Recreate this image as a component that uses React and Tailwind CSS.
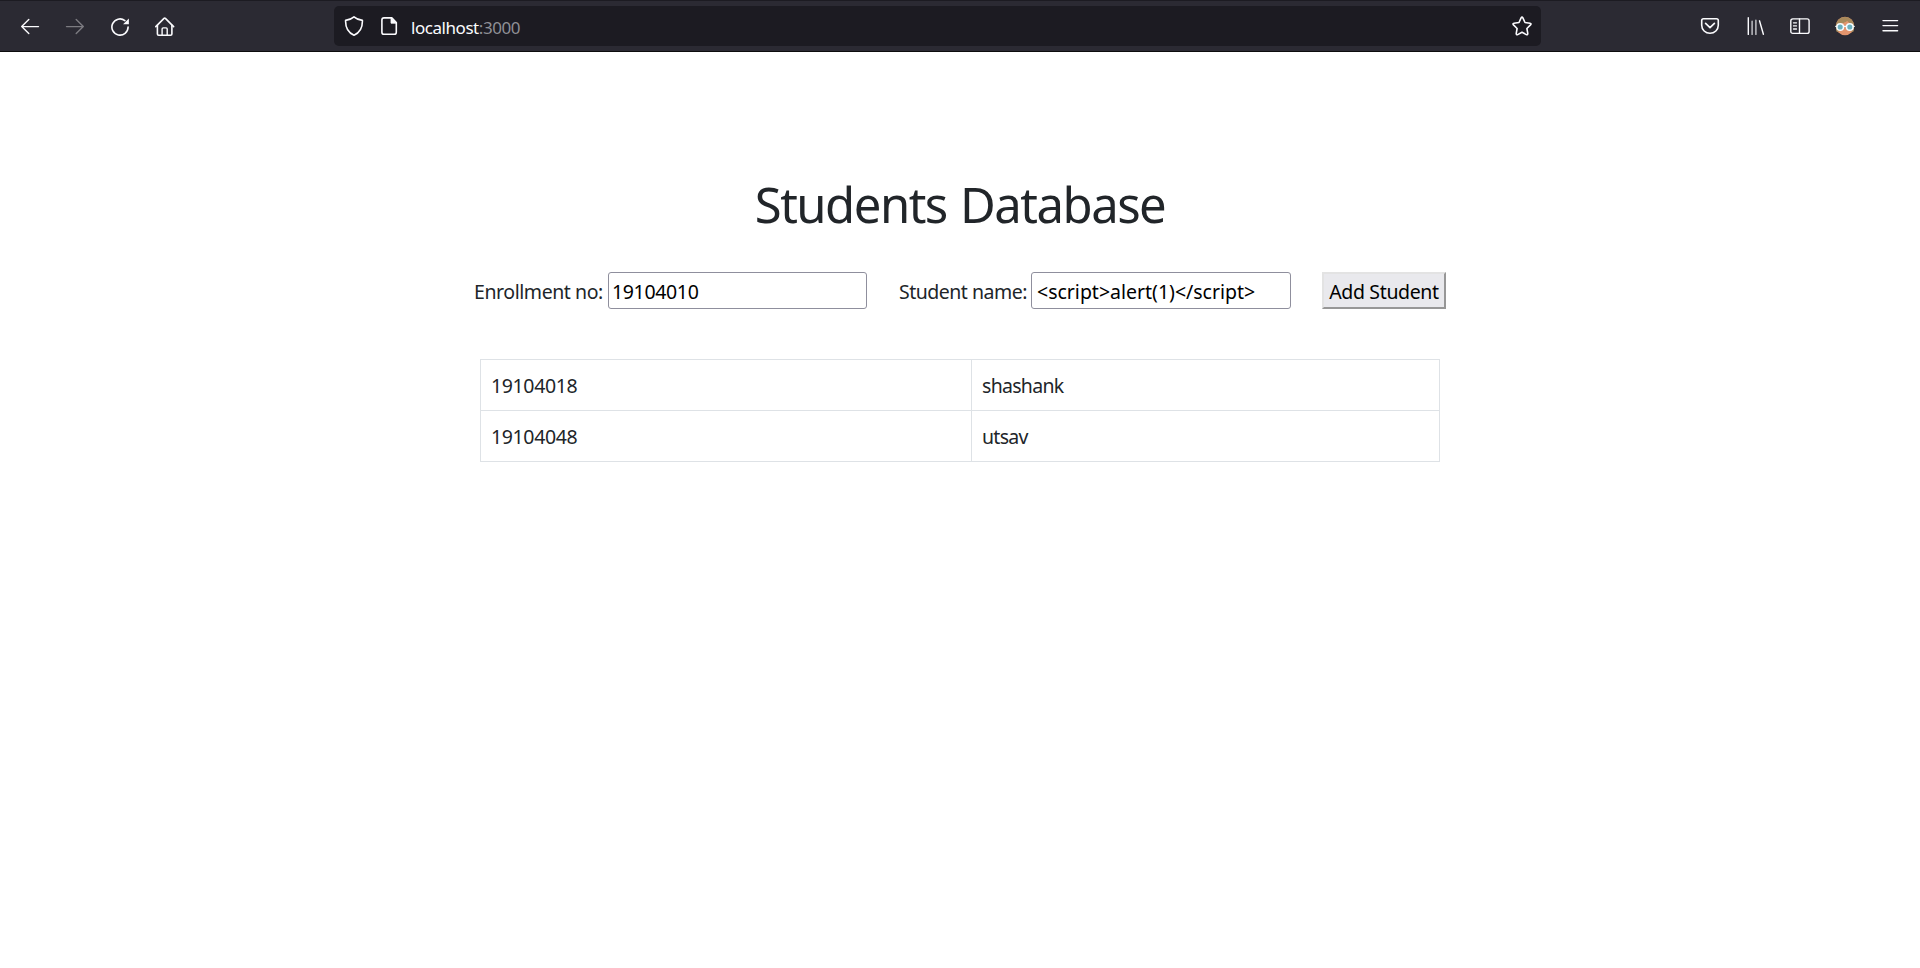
import React from "react";

function Icon({ children, className = "" }) {
  return (
    <svg
      viewBox="0 0 20 20"
      fill="none"
      stroke="currentColor"
      strokeWidth="1.4"
      strokeLinecap="round"
      strokeLinejoin="round"
      className={`h-5 w-5 shrink-0 ${className}`}
    >
      {children}
    </svg>
  );
}

const BackIcon = () => (
  <Icon>
    <path d="M1.7 10.6H18.5M8.8 3.6L1.7 10.6L8.8 17.6" />
  </Icon>
);

const ForwardIcon = () => (
  <Icon className="text-[#7c7b81]">
    <path d="M1.5 10.6H18.3M11.2 3.6L18.3 10.6L11.2 17.6" />
  </Icon>
);

const ReloadIcon = () => (
  <Icon>
    <path strokeWidth="1.6" d="M14.9 4.6A8.1 8.1 0 1 0 18.1 11" />
    <path d="M18.9 2.5V8.3H13.1Z" fill="currentColor" stroke="none" />
  </Icon>
);

const HomeIcon = () => (
  <Icon>
    <path strokeWidth="1.6" d="M0.8 10.6L9 2.4Q9.7 1.8 10.4 2.4L18.6 10.6" />
    <path strokeWidth="1.6" d="M2.4 9.4V18Q2.4 19.2 3.7 19.2H15.6Q16.9 19.2 16.9 18V9.4" />
    <path d="M7.1 19V13Q7.1 11.9 8.2 11.9H11.1Q12.2 11.9 12.2 13V19" />
  </Icon>
);

const ShieldIcon = () => (
  <Icon>
    <path
      strokeWidth="1.6"
      d="M10 0.9C8 2.7 4.6 4 1.6 4.4C1.4 10.4 3 16.3 10 19.2C17 16.3 18.6 10.4 18.4 4.4C15.4 4 12 2.7 10 0.9Z"
    />
  </Icon>
);

const PageIcon = () => (
  <Icon>
    <path strokeWidth="1.6" d="M12.8 1.9H5Q2.9 1.9 2.9 4V16.2Q2.9 18.3 5 18.3H15.2Q17.3 18.3 17.3 16.2V6.6Z" />
    <path d="M12 1.8V7.2H17.6Z" fill="currentColor" strokeWidth="0.8" />
  </Icon>
);

const StarIcon = () => (
  <Icon>
    <path
      strokeWidth="1.6"
      d="M9.1 1.9Q10 .4 10.9 1.9L13 6.5L18 7.2Q19.7 7.6 18.5 8.9L14.9 12.5L15.8 17.6Q15.8 19.3 14.3 18.6L10 16.2L5.7 18.6Q4.2 19.3 4.2 17.6L5.1 12.5L1.5 8.9Q.3 7.6 2 7.2L7 6.5Z"
    />
  </Icon>
);

const PocketIcon = () => (
  <Icon>
    <path strokeWidth="1.6" d="M3.5 2.8H16.5Q18.3 2.8 18.3 4.6V9.3A8.3 8 0 0 1 1.7 9.3V4.6Q1.7 2.8 3.5 2.8Z" />
    <path strokeWidth="1.7" d="M5.6 7.4L10 11.6L14.4 7.4" />
  </Icon>
);

const LibraryIcon = () => (
  <Icon>
    <path d="M3.3 1.8V18.4" />
    <path d="M7.1 5.3V18.4M10.9 4.3V18.4" stroke="#c9c9cd" />
    <path d="M14.5 4.8L18.4 18.3" />
  </Icon>
);

const SidebarIcon = () => (
  <Icon>
    <rect x="0.8" y="2.9" width="18.3" height="14.5" rx="2" />
    <path d="M9.5 3V17.3" />
    <path d="M3.5 6.8H6.5M3.5 9.9H6.5M3.5 13H6.5" strokeWidth="1.3" />
  </Icon>
);

const AvatarIcon = () => (
  <Icon>
    <g stroke="none">
      <circle cx="10" cy="10" r="9.2" fill="#e2946d" />
      <path d="M1.5 15.6Q0 9 2.2 5.2Q5 .8 10 .9Q15 .8 17.8 5.2Q20 9 18.5 15.6L16.5 16.2V9L12.5 5.2Q8 7.7 3.6 7.8V16.2Z" fill="#a8895b" />
      <path d="M12.3 5.1Q9 8 3.6 8V13H16.4V9Q14 7.6 12.3 5.1Z" fill="#e2946d" />
    </g>
    <circle cx="5.2" cy="11" r="3.3" fill="#6baebd" stroke="#f4fbff" strokeWidth="1.5" />
    <circle cx="14.8" cy="11" r="3.3" fill="#6baebd" stroke="#f4fbff" strokeWidth="1.5" />
    <path d="M8.8 10.4H11.2M.9 10.4H1.6M18.4 10.4H19.1" stroke="#f4fbff" />
  </Icon>
);

const MenuIcon = () => (
  <Icon>
    <path d="M3 4.6H17.6M3 9.6H17.6M3 14.8H17.6" />
  </Icon>
);

function BrowserToolbar() {
  return (
    <header className="flex h-[52px] items-center border-t border-b border-t-[#1c1b22] border-b-[#0c0c0d] bg-[#2b2a33] pr-5 pl-5 text-[#fbfbfe]">
      <nav className="flex w-[314px] shrink-0 items-center gap-[25px]">
        <BackIcon />
        <ForwardIcon />
        <ReloadIcon />
        <HomeIcon />
      </nav>
      <div className="flex h-10 w-[1207px] shrink-0 items-center rounded-[5px] bg-[#1c1b22] pr-[9px] pl-[10px]">
        <ShieldIcon />
        <span className="ml-[15px] flex">
          <PageIcon />
        </span>
        <span className="ml-[12px] flex-1 pt-[3px] text-[17px] leading-5 tracking-[-0.45px]">
          localhost<span className="text-[#8f8f95]">:3000</span>
        </span>
        <StarIcon />
      </div>
      <div className="ml-auto flex items-center gap-[25px]">
        <PocketIcon />
        <LibraryIcon />
        <SidebarIcon />
        <AvatarIcon />
        <MenuIcon />
      </div>
    </header>
  );
}

const students = [
  { enrollment: "19104018", name: "shashank" },
  { enrollment: "19104048", name: "utsav" },
];

const inputClass =
  "h-[37px] rounded-[3px] border border-[#8f8f9d] bg-white pt-[2px] text-black outline-none";

export default function App() {
  return (
    <div className="min-h-[968px] bg-white font-['Noto_Sans','Open_Sans',sans-serif] text-[19.5px] tracking-[-0.43px] text-[#212529]">
      <BrowserToolbar />
      <main className="flex flex-col items-center pt-[122px]">
        <h1 className="h-[60px] text-center text-[49px] leading-[60px] tracking-[-1.5px] whitespace-nowrap [word-spacing:2px]">
          Students Database
        </h1>
        <form className="mt-[38px] flex w-[972px] items-center" onSubmit={(e) => e.preventDefault()}>
          <label className="flex items-center">
            <span className="w-[134px] pt-[3px] leading-[30px] whitespace-nowrap">Enrollment no:</span>
            <input className={`${inputClass} w-[259px] px-[3px] tracking-[-0.35px]`} defaultValue="19104010" />
          </label>
          <label className="ml-[31px] flex items-center">
            <span className="w-[133px] pt-[3px] pl-px leading-[30px] tracking-[-0.5px] whitespace-nowrap">
              Student name:
            </span>
            <input
              className={`${inputClass} w-[260px] px-[5px] tracking-[-0.01px]`}
              defaultValue="<script>alert(1)</script>"
            />
          </label>
          <button
            type="submit"
            className="ml-[31px] h-[37px] w-[124px] border-2 border-t-[#e3e3e3] border-r-[#979797] border-b-[#979797] border-l-[#e3e3e3] bg-[#e9e9ed] pt-[3px] leading-[30px] tracking-[-0.35px] whitespace-nowrap text-black"
          >
            Add Student
          </button>
        </form>
        <table className="mt-[50px] w-[960px] table-fixed border-collapse">
          <colgroup>
            <col className="w-[491px]" />
            <col />
          </colgroup>
          <tbody>
            {students.map((s) => (
              <tr key={s.enrollment} className="h-[51px]">
                <td className="border border-[#dee2e6] px-[10px] pt-px leading-[30px] tracking-[-0.37px]">
                  {s.enrollment}
                </td>
                <td className="border border-[#dee2e6] px-[10px] pt-px leading-[30px] tracking-[-0.7px]">{s.name}</td>
              </tr>
            ))}
          </tbody>
        </table>
      </main>
    </div>
  );
}
